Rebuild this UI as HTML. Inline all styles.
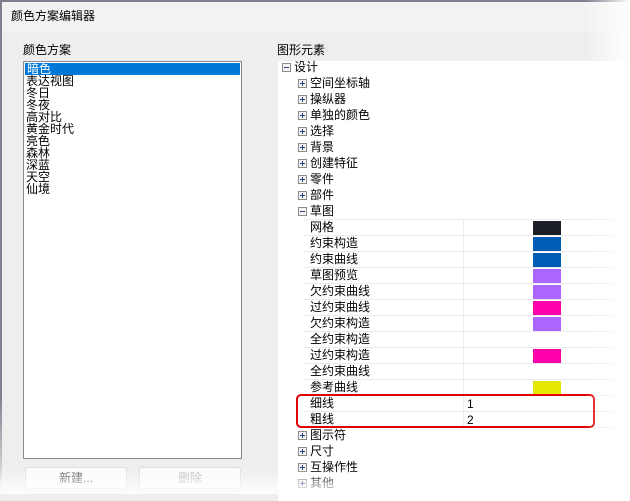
<!DOCTYPE html>
<html><head><meta charset="utf-8"><style>
*{margin:0;padding:0;box-sizing:border-box}
body{width:630px;height:494px;position:relative;overflow:hidden;background:#eeeeee;font-family:"Liberation Sans","Noto Sans CJK SC","WenQuanYi Zen Hei",sans-serif;font-size:12px;color:#000}
.a{position:absolute}
.title{left:0;top:0;width:630px;height:32px;background:#f2f2f2;border-top:2px solid #7d808c;border-left:2px solid #7d808c}
.lb{left:23px;top:61px;width:219px;height:398px;background:#fff;border:1px solid #8a8a96}
.lb div{height:12px;line-height:12px;padding-left:2px;font-size:12px;white-space:nowrap}
.sel{background:#0078d7;color:#fff;margin:1px 1px 0 1px}
.btn{height:22px;border:1px solid #ddd;border-radius:3px;background:#fbfbfb;text-align:center;line-height:20px;color:#555;font-size:12px}
.tree{left:278px;top:61px;width:360px;height:440px;background:#fff}
.r{position:absolute;height:16px;line-height:16px;white-space:nowrap;font-size:12px}
.bx{position:absolute;width:9px;height:9px;border:1px solid #8c8c8c;background:#f4f4f4;top:4px}
.bx:before{content:"";position:absolute;left:1px;top:3px;width:5px;height:1px;background:#2a3f8f}
.bx.p:after{content:"";position:absolute;left:3px;top:1px;width:1px;height:5px;background:#2a3f8f}
.gl{position:absolute;left:303px;width:327px;height:1px;background:#ebebeb}
.sw{position:absolute;left:533px;width:28px;height:14px}
</style></head><body>
<div class="a title"></div>
<div class="a" style="left:0;top:0;width:2px;height:494px;background:linear-gradient(to bottom,#7d808c 80%,rgba(125,128,140,0))"></div>
<div class="a" style="left:11px;top:7px;font-size:12px">颜色方案编辑器</div>
<div class="a" style="left:23px;top:41px">颜色方案</div>
<div class="a lb">
<div class="sel">暗色</div><div>表达视图</div><div>冬日</div><div>冬夜</div><div>高对比</div><div>黄金时代</div><div>亮色</div><div>森林</div><div>深蓝</div><div>天空</div><div>仙境</div>
</div>
<div class="a btn" style="left:25px;top:467px;width:102px">新建...</div>
<div class="a btn" style="left:139px;top:467px;width:102px;color:#bbb">删除</div>
<div class="a" style="left:277px;top:41px">图形元素</div>
<div class="a tree"></div>
<div class="a" style="left:463px;top:219px;width:1px;height:208px;background:#ebebeb"></div>
<div class="gl" style="top:219px"></div><div class="gl" style="top:235px"></div><div class="gl" style="top:251px"></div><div class="gl" style="top:267px"></div><div class="gl" style="top:283px"></div><div class="gl" style="top:299px"></div><div class="gl" style="top:315px"></div><div class="gl" style="top:331px"></div><div class="gl" style="top:347px"></div><div class="gl" style="top:363px"></div><div class="gl" style="top:379px"></div><div class="gl" style="top:395px"></div><div class="gl" style="top:411px"></div><div class="gl" style="top:427px"></div>
<div class="r" style="left:282px;top:59px"><span class="bx" style="left:0"></span><span style="margin-left:12px">设计</span></div>
<div class="r" style="left:298px;top:75px"><span class="bx p"></span><span style="margin-left:12px">空间坐标轴</span></div>
<div class="r" style="left:298px;top:91px"><span class="bx p"></span><span style="margin-left:12px">操纵器</span></div>
<div class="r" style="left:298px;top:107px"><span class="bx p"></span><span style="margin-left:12px">单独的颜色</span></div>
<div class="r" style="left:298px;top:123px"><span class="bx p"></span><span style="margin-left:12px">选择</span></div>
<div class="r" style="left:298px;top:139px"><span class="bx p"></span><span style="margin-left:12px">背景</span></div>
<div class="r" style="left:298px;top:155px"><span class="bx p"></span><span style="margin-left:12px">创建特征</span></div>
<div class="r" style="left:298px;top:171px"><span class="bx p"></span><span style="margin-left:12px">零件</span></div>
<div class="r" style="left:298px;top:187px"><span class="bx p"></span><span style="margin-left:12px">部件</span></div>
<div class="r" style="left:298px;top:203px"><span class="bx"></span><span style="margin-left:12px">草图</span></div>
<div class="r" style="left:310px;top:219px">网格</div>
<div class="r" style="left:310px;top:235px">约束构造</div>
<div class="r" style="left:310px;top:251px">约束曲线</div>
<div class="r" style="left:310px;top:267px">草图预览</div>
<div class="r" style="left:310px;top:283px">欠约束曲线</div>
<div class="r" style="left:310px;top:299px">过约束曲线</div>
<div class="r" style="left:310px;top:315px">欠约束构造</div>
<div class="r" style="left:310px;top:331px">全约束构造</div>
<div class="r" style="left:310px;top:347px">过约束构造</div>
<div class="r" style="left:310px;top:363px">全约束曲线</div>
<div class="r" style="left:310px;top:379px">参考曲线</div>
<div class="r" style="left:310px;top:395px">细线</div>
<div class="r" style="left:310px;top:411px">粗线</div>
<div class="r" style="left:467px;top:396px">1</div>
<div class="r" style="left:467px;top:412px">2</div>
<div class="sw" style="top:221px;background:#1c1f26"></div>
<div class="sw" style="top:237px;background:#005bb5"></div>
<div class="sw" style="top:253px;background:#005bb5"></div>
<div class="sw" style="top:269px;background:#aa66ff"></div>
<div class="sw" style="top:285px;background:#aa66ff"></div>
<div class="sw" style="top:301px;background:#ff00aa"></div>
<div class="sw" style="top:317px;background:#aa66ff"></div>
<div class="sw" style="top:349px;background:#ff00aa"></div>
<div class="sw" style="top:381px;background:#e6e600"></div>
<div class="a" style="left:296px;top:394px;width:299px;height:34px;border:2px solid #e00000;border-radius:5px"></div>
<div class="r" style="left:298px;top:427px"><span class="bx p"></span><span style="margin-left:12px">图示符</span></div>
<div class="r" style="left:298px;top:443px"><span class="bx p"></span><span style="margin-left:12px">尺寸</span></div>
<div class="r" style="left:298px;top:459px"><span class="bx p"></span><span style="margin-left:12px">互操作性</span></div>
<div class="r" style="left:298px;top:475px"><span class="bx p"></span><span style="margin-left:12px">其他</span></div>
<div class="a" style="left:0;top:468px;width:630px;height:26px;background:linear-gradient(to bottom,rgba(255,255,255,0),rgba(255,255,255,.9))"></div>
<div class="a" style="left:585px;top:0;width:45px;height:494px;background:linear-gradient(to right,rgba(255,255,255,0),#fff)"></div>
</body></html>
